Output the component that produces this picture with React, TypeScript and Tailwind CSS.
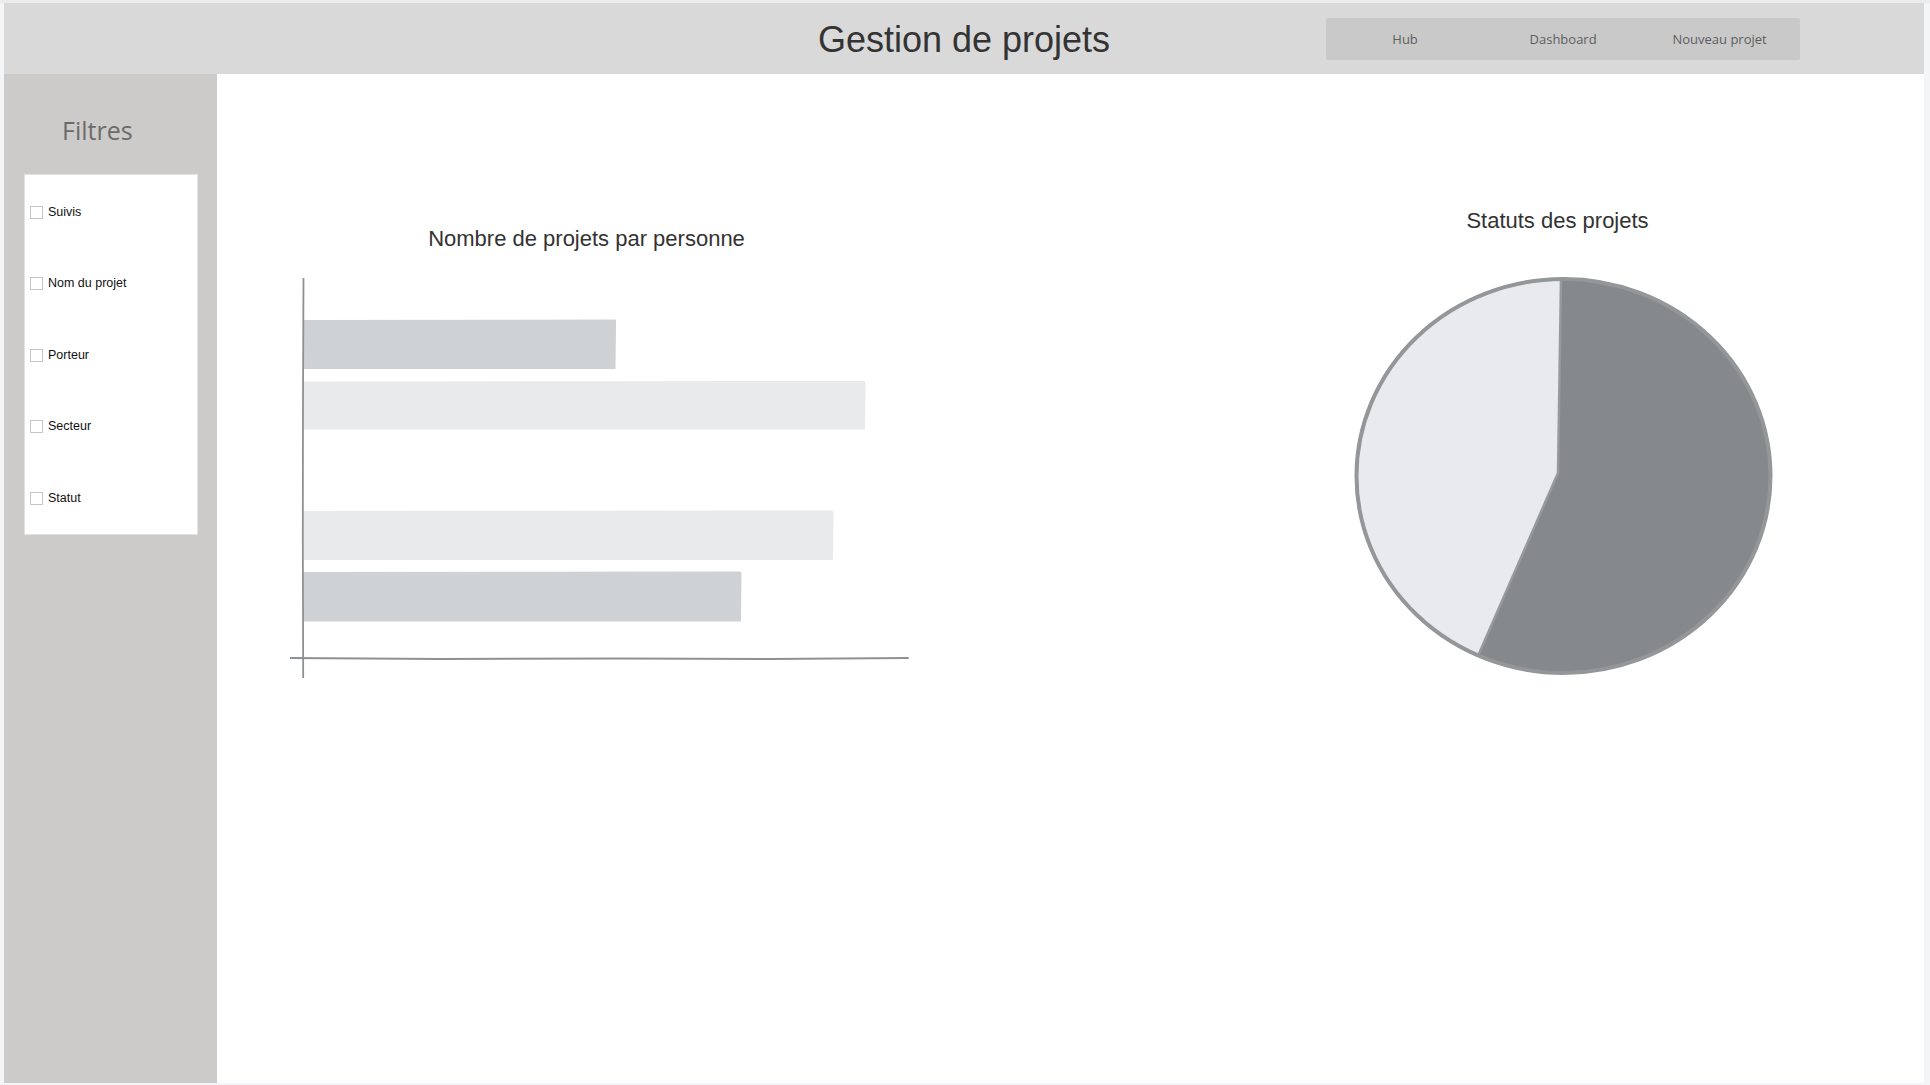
import React from "react";

const filters = ["Suivis", "Nom du projet", "Porteur", "Secteur", "Statut"];

function BarChart() {
  return (
    <svg width="620" height="400" viewBox="0 0 620 400" className="block">
      <path d="M13 42 L325 41.5 Q326.5 42 326 44 L325.5 91 L13 91 Z" fill="#cfd2d5" />
      <path d="M13 103.5 L574 103 Q576 104 575.5 106 L575 151.5 L13 151.5 Z" fill="#e9eaec" />
      <path d="M13 233 L542 232.5 Q544 233.5 543.5 235.5 L543 282 L13 282 Z" fill="#e9eaec" />
      <path d="M13 294 L450 293.5 Q452 294.5 451.5 296.5 L451 343.5 L13 343.5 Z" fill="#cfd2d5" />
      <path d="M13.5 0 L13 120 L12.8 260 L13.2 400" stroke="#8e9193" strokeWidth="1.8" fill="none" strokeLinecap="round" />
      <path d="M0 380 L150 381 L330 380.5 L480 381 L618 380" stroke="#8e9193" strokeWidth="2" fill="none" strokeLinecap="round" />
    </svg>
  );
}

function PieChart() {
  return (
    <svg width="419" height="398" viewBox="0 0 419 398" className="block">
      <ellipse cx="209.5" cy="199" rx="207" ry="197" fill="#e9eaee" />
      <path d="M204 196 L207 2 A207 197 0 1 1 124 379 Z" fill="#85898c" />
      <path d="M124 379 L204 196 L207 2" stroke="#979a9c" strokeWidth="2.5" fill="none" strokeLinejoin="round" />
      <ellipse cx="209.5" cy="199" rx="207" ry="197" fill="none" stroke="#939799" strokeWidth="4" />
    </svg>
  );
}

export default function App() {
  return (
    <div className="w-[1930px] h-[1085px] bg-[#f4f5f7] border-t-[3px] border-[#ececec] pl-[4px] pr-[6px] pb-[2px] overflow-hidden">
      <div className="flex flex-col w-[1920px] h-[1080px]">
        <header className="h-[71px] bg-[#d9d9d9] grid grid-cols-[1fr_auto_1fr] items-center shrink-0">
          <div />
          <h1 className="pt-[2px] text-[36px] leading-[42px] text-[#333333] font-['Liberation_Sans',Arial,sans-serif]">
            Gestion de projets
          </h1>
          <div className="flex items-center">
            <nav className="ml-[216px] w-[474px] h-[42px] bg-[#c9c9c9] rounded-[2px] grid grid-cols-3 items-center pt-[2px] text-[13px] text-[#5e5e5e] font-['Open_Sans',sans-serif]">
              <span className="text-center">Hub</span>
              <span className="text-center">Dashboard</span>
              <span className="text-center pr-[3px]">Nouveau projet</span>
            </nav>
          </div>
        </header>
        <div className="flex flex-1 min-h-0">
          <aside className="w-[213px] bg-[#cccbc9] shrink-0 pt-[39px]">
            <div className="pl-[58px] text-[25px] leading-[34px] text-[#6b6b6b] font-['Open_Sans',sans-serif]">
              Filtres
            </div>
            <div className="mt-[27px] ml-[20px] w-[174px] bg-white border border-[#e2e2e2] pt-[1.5px]">
              {filters.map((f) => (
                <label
                  key={f}
                  className="h-[71.5px] flex items-center pl-[5px] gap-[5px] text-[12.5px] text-[#111111] font-['Liberation_Sans',Arial,sans-serif]"
                >
                  <span className="w-[13px] h-[13px] border border-[#c6c6c6] bg-white shrink-0" />
                  <span>{f}</span>
                </label>
              ))}
            </div>
          </aside>
          <main className="flex-1 bg-white flex items-start">
            <section className="ml-[73px] mt-[152px] w-[620px]">
              <h2 className="h-[25px] leading-[25px] pr-[27px] text-center text-[22px] text-[#333333] font-['Liberation_Sans',Arial,sans-serif]">
                Nombre de projets par personne
              </h2>
              <div className="mt-[27px]">
                <BarChart />
              </div>
            </section>
            <section className="ml-[444px] mt-[134px] w-[419px]">
              <h2 className="h-[25px] leading-[25px] pr-[12px] text-center text-[22px] text-[#333333] font-['Liberation_Sans',Arial,sans-serif]">
                Statuts des projets
              </h2>
              <div className="mt-[44px]">
                <PieChart />
              </div>
            </section>
          </main>
        </div>
      </div>
    </div>
  );
}
